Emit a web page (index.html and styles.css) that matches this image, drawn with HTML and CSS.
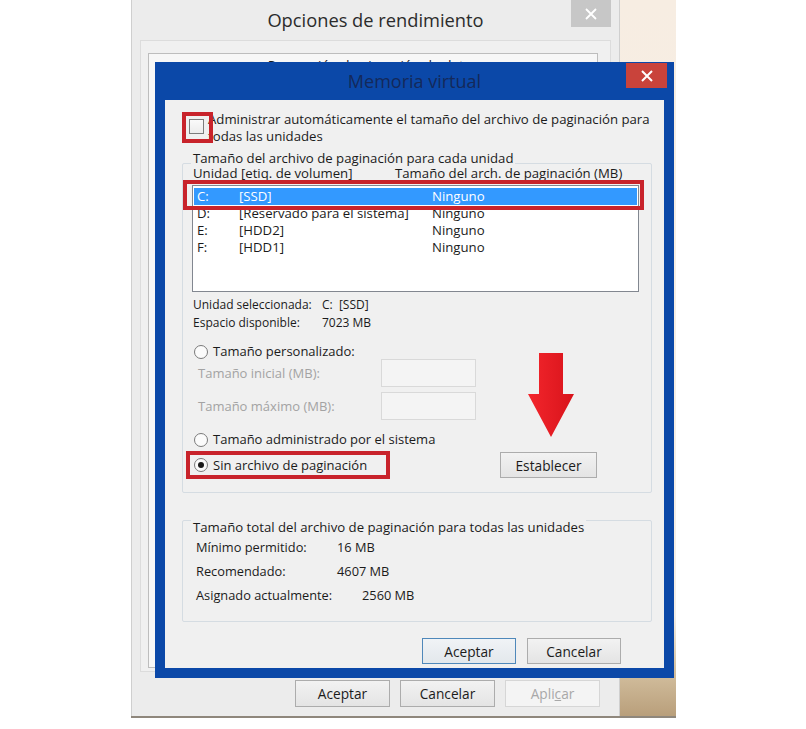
FILE: index.html
```html
<!DOCTYPE html>
<html lang="es">
<head>
    <meta charset="UTF-8">
    <title>Memoria virtual</title>
    <link rel="stylesheet" href="styles.css">
</head>
<body>
    <div class="shot">
        <!-- ventana de fondo -->
        <div class="perf">
            <div class="perf-title">
                Opciones de rendimiento
                <span class="perf-close">
                    <svg width="12" height="12" viewBox="0 0 12 12"><path d="M1 1L11 11M11 1L1 11" stroke="#fff" stroke-width="1.8"/></svg>
                </span>
            </div>
            <div class="perf-client">
                <div class="tabpage">Prevención de ejecución de datos</div>
            </div>
            <div class="perf-foot">
                <button class="btn">Aceptar</button>
                <button class="btn">Cancelar</button>
                <button class="btn" disabled>Apli<u>c</u>ar</button>
            </div>
        </div>
        <div class="desk"></div>

        <!-- dialogo Memoria virtual -->
        <div class="vm">
            <div class="vm-title">
                Memoria virtual
                <span class="vm-close">
                    <svg width="12" height="12" viewBox="0 0 12 12"><path d="M1 1L11 11M11 1L1 11" stroke="#fff" stroke-width="2"/></svg>
                </span>
            </div>
            <div class="vm-body">
                <div class="auto">
                    <span class="check"></span>
                    <span class="auto-label">Administrar automáticamente el tamaño del archivo de paginación para<br>todas las unidades</span>
                </div>

                <div class="group">
                    <div class="group-title">Tamaño del archivo de paginación para cada unidad</div>
                    <div class="list-head">
                        <span>Unidad [etiq. de volumen]</span>
                        <span>Tamaño del arch. de paginación (MB)</span>
                    </div>
                    <div class="list">
                        <div class="row selected"><span>C:</span><span>[SSD]</span><span>Ninguno</span></div>
                        <div class="row"><span>D:</span><span>[Reservado para el sistema]</span><span>Ninguno</span></div>
                        <div class="row"><span>E:</span><span>[HDD2]</span><span>Ninguno</span></div>
                        <div class="row"><span>F:</span><span>[HDD1]</span><span>Ninguno</span></div>
                    </div>
                    <div class="info">
                        <span>Unidad seleccionada:</span><span>C:&nbsp; [SSD]</span>
                        <span>Espacio disponible:</span><span>7023 MB</span>
                    </div>
                    <div class="radio-row custom"><span class="radio"></span>Tamaño personalizado:</div>
                    <div class="size-row first"><span class="size-label">Tamaño inicial (MB):</span><span class="field"></span></div>
                    <div class="size-row"><span class="size-label">Tamaño máximo (MB):</span><span class="field"></span></div>
                    <div class="radio-row sys"><span class="radio"></span>Tamaño administrado por el sistema</div>
                    <div class="radio-row none"><span class="radio on"></span>Sin archivo de paginación<button class="btn set">Establecer</button></div>
                </div>

                <div class="group group-total">
                    <div class="group-title">Tamaño total del archivo de paginación para todas las unidades</div>
                    <div class="total"><span>Mínimo permitido:</span><span>16 MB</span></div>
                    <div class="total"><span>Recomendado:</span><span>4607 MB</span></div>
                    <div class="total wide"><span>Asignado actualmente:</span><span>2560 MB</span></div>
                </div>

                <div class="vm-buttons">
                    <button class="btn focus">Aceptar</button>
                    <button class="btn">Cancelar</button>
                </div>

                <!-- marcas rojas del tutorial -->
                <span class="mark mark-check"></span>
                <span class="mark mark-row"></span>
                <span class="mark mark-none"></span>
                <svg class="arrow" width="46" height="84" viewBox="0 0 46 84">
                    <defs>
                        <linearGradient id="ar" x1="0" x2="1">
                            <stop offset="0" stop-color="#f3262c"/>
                            <stop offset="1" stop-color="#d8131b"/>
                        </linearGradient>
                    </defs>
                    <path d="M11 0H35V41H46L23 84L0 41H11Z" fill="url(#ar)"/>
                </svg>
            </div>
        </div>
    </div>
</body>
</html>
```

FILE: styles.css
```css
* {
    box-sizing: border-box;
}
body {
    margin: 0;
    background: #fff;
    font-family: "Open Sans", "Noto Sans", sans-serif;
    font-size: 13.2px;
    color: #1b1b1b;
}
.shot {
    position: relative;
    display: flex;
    width: 545px;
    height: 718px;
    margin-left: 131px;
    border-bottom: 2px solid #8f877c;
}

/* ventana de atras */
.perf {
    width: 489px;
    display: flex;
    flex-direction: column;
    background: #ececec;
    border-left: 1px solid #cfcfcf;
    border-right: 1px solid #cfcfcf;
    padding: 0 8px;
}
.perf-title {
    position: relative;
    height: 40px;
    line-height: 40px;
    text-align: center;
    font-size: 18.3px;
    color: #2b2b2b;
}
.perf-close {
    position: absolute;
    right: 0;
    top: 0;
    width: 40px;
    height: 27px;
    background: #c7c7c7;
    display: flex;
    align-items: center;
    justify-content: center;
}
.perf-client {
    flex: 1;
    background: #f0f0f0;
    border: 1px solid #dcdcdc;
    padding: 12px 12px 3px 7px;
    display: flex;
}
.tabpage {
    flex: 1;
    border: 1px solid #bdbdbd;
    background: #f7f7f7;
    text-align: center;
    padding-top: 3px;
    line-height: 17px;
    font-size: 13.5px;
}
.perf-foot {
    height: 44px;
    display: flex;
    justify-content: flex-end;
    gap: 10px;
    padding: 8px 11px 0 0;
}
.perf-foot .btn {
    width: 95px;
    height: 27px;
}
.desk {
    flex: 1;
    background: linear-gradient(#f7ede2 0%, #f4eee6 86%, #d6c3a3 93%, #b99f7b 100%);
}

/* botones */
.btn {
    font: inherit;
    font-size: 13.7px;
    height: 26px;
    width: 94px;
    padding: 0;
    border: 1px solid #acacac;
    background: linear-gradient(#f2f2f2, #e4e4e4);
    color: #1b1b1b;
}
.btn.focus {
    border-color: #4f88ba;
    background: linear-gradient(#f0f3f6, #e3e8ec);
}
.btn:disabled {
    border-color: #d6d6d6;
    background: #f4f4f4;
    color: #a8a8a8;
}

/* dialogo */
.vm {
    position: absolute;
    left: 24px;
    top: 62px;
    width: 519px;
    height: 616px;
    background: #0b48a8;
    padding: 0 10px 10px;
    display: flex;
    flex-direction: column;
}
.vm-title {
    position: relative;
    height: 38px;
    line-height: 38px;
    text-align: center;
    font-size: 18px;
    color: #14295a;
}
.vm-close {
    position: absolute;
    right: -3px;
    top: 1px;
    width: 41px;
    height: 25px;
    background: #c9433b;
    display: flex;
    align-items: center;
    justify-content: center;
}
.vm-body {
    flex: 1;
    position: relative;
    background: #f0f0f0;
    padding-top: 11px;
}
.auto {
    display: flex;
    align-items: flex-start;
    padding-left: 24px;
    line-height: 17px;
}
.check {
    width: 15px;
    height: 15px;
    margin-top: 8px;
    border: 1px solid #7c7c7c;
    background: linear-gradient(#fafafa, #ececec);
}
.auto-label {
    margin-left: 4px;
    white-space: nowrap;
}

.group {
    margin: 18px 12px 0 17px;
    padding-bottom: 14px;
    border: 1px solid #d5dce2;
    border-radius: 2px;
}
.group-title {
    width: fit-content;
    margin: -13px 0 0 8px;
    padding: 0 2px;
    line-height: 15px;
    background: #f0f0f0;
}
.list-head {
    display: grid;
    grid-template-columns: 202px 1fr;
    padding-left: 10px;
    line-height: 14px;
    white-space: nowrap;
}
.list {
    height: 107px;
    margin: 5px 12px 0 9px;
    border: 1px solid #828790;
    background: #fff;
    padding: 2px 1px 0;
}
.row {
    display: grid;
    grid-template-columns: 42px 193px 1fr;
    padding-left: 3px;
    line-height: 17px;
    white-space: nowrap;
}
.row.selected {
    background: #3399ff;
    color: #fff;
}
.info {
    display: grid;
    grid-template-columns: 129px 1fr;
    padding-left: 10px;
    margin-top: 4px;
    line-height: 18px;
    font-size: 12px;
}
.radio-row {
    display: flex;
    align-items: center;
    padding-left: 11px;
    line-height: 17px;
    font-size: 13px;
}
.radio-row.custom {
    margin-top: 11px;
}
.radio-row.sys {
    margin-top: 11px;
}
.radio-row.none {
    margin-top: 4px;
    height: 26px;
}
.radio {
    width: 14px;
    height: 14px;
    margin-right: 5px;
    border: 1px solid #7a7a7a;
    border-radius: 50%;
    background: #fbfbfb;
    display: flex;
    align-items: center;
    justify-content: center;
}
.radio.on::after {
    content: "";
    width: 6px;
    height: 6px;
    border-radius: 50%;
    background: #1a1a1a;
}
.btn.set {
    margin: 0 54px 0 auto;
    width: 97px;
}
.size-row {
    display: flex;
    align-items: center;
    height: 28px;
    padding-left: 15px;
    margin-top: 5px;
    font-size: 13px;
    color: #a3a3a3;
}
.size-row.first {
    margin-top: -1px;
}
.size-label {
    width: 183px;
}
.field {
    width: 95px;
    height: 28px;
    border: 1px solid #d9d9d9;
    background: #f4f4f4;
}

.group-total {
    margin-top: 27px;
}
.group-total .group-title {
    margin-top: -1px;
}
.total {
    display: grid;
    grid-template-columns: 141px 1fr;
    padding-left: 13px;
    line-height: 24px;
    font-size: 12.8px;
}
.group-total .total:first-of-type {
    margin-top: -7px;
}
.total.wide {
    grid-template-columns: 166px 1fr;
}
.vm-buttons {
    display: flex;
    justify-content: flex-end;
    gap: 11px;
    margin: 16px 43px 0 0;
}

/* marcas rojas */
.mark {
    position: absolute;
    border: 4px solid #c8232b;
}
.mark-check {
    left: 17px;
    top: 12px;
    width: 31px;
    height: 31px;
}
.mark-row {
    left: 18px;
    top: 80px;
    width: 461px;
    height: 30px;
}
.mark-none {
    left: 21px;
    top: 351px;
    width: 204px;
    height: 28px;
}
.arrow {
    position: absolute;
    left: 363px;
    top: 253px;
}
```
